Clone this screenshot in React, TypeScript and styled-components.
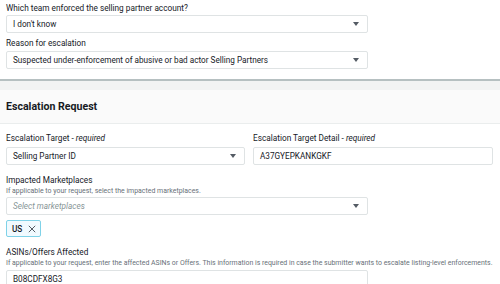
import React from "react";
import styled, { createGlobalStyle } from "styled-components";

const Global = createGlobalStyle`
  html, body { margin: 0; padding: 0; background: #ffffff; }
  body { font-family: Roboto, "Noto Sans", sans-serif; color: #16191f; width: 500px; height: 284px; overflow: hidden; }
`;

const Page = styled.div`
  display: flex;
  flex-direction: column;
`;

const TopSection = styled.div`
  display: flex;
  flex-direction: column;
  padding: 2px 6px 0 6px;
  height: 81px;
  box-sizing: border-box;
  border-bottom: 2px solid #b6c0c1;
`;

const Band = styled.div`
  height: 9px;
  background: #f2f3f3;
`;

const Header = styled.div`
  height: 33px;
  background: #fafafa;
  border-bottom: 1px solid #eaeded;
  display: flex;
  align-items: center;
  padding: 0 6px;
  font-size: 10.6px;
  font-weight: 700;
  color: #16191f;
`;

const Body = styled.div`
  display: flex;
  flex-direction: column;
  padding: 8px 7px 0 6px;
`;

const Row = styled.div`
  display: grid;
  grid-template-columns: 239px 240px;
  column-gap: 8px;
`;

const Field = styled.div<{ $mt?: number; $w?: number }>`
  display: flex;
  flex-direction: column;
  margin-top: ${(p) => p.$mt ?? 0}px;
  width: ${(p) => (p.$w ? `${p.$w}px` : "auto")};
`;

const Label = styled.div<{ $mb?: number; $h?: number }>`
  font-size: 8.25px;
  line-height: ${(p) => p.$h ?? 12}px;
  height: ${(p) => p.$h ?? 12}px;
  color: #16191f;
  white-space: nowrap;
  margin-bottom: ${(p) => p.$mb ?? 1}px;
  em { font-style: italic; font-weight: 400; }
`;

const Helper = styled.div<{ $mb?: number }>`
  font-size: 6.95px;
  line-height: 10px;
  height: 10px;
  color: #687078;
  white-space: nowrap;
  margin-bottom: ${(p) => p.$mb ?? 1}px;
`;

const Box = styled.div<{ $placeholder?: boolean; $w?: number }>`
  height: 18px;
  width: ${(p) => (p.$w ? `${p.$w}px` : "auto")};
  box-sizing: border-box;
  border: 1px solid #dfe3e4;
  border-radius: 2px;
  background: #fff;
  display: flex;
  align-items: center;
  justify-content: space-between;
  padding: 0 8px 0 6px;
  font-size: 8.2px;
  color: ${(p) => (p.$placeholder ? "#879596" : "#16191f")};
  font-style: ${(p) => (p.$placeholder ? "italic" : "normal")};
  white-space: nowrap;
`;

const Caret = styled.span`
  width: 0;
  height: 0;
  border-left: 3px solid transparent;
  border-right: 3px solid transparent;
  border-top: 4px solid #545b64;
  flex-shrink: 0;
`;

const Token = styled.div`
  margin-top: 5px;
  align-self: flex-start;
  height: 17px;
  box-sizing: border-box;
  padding: 0 4px 0 5px;
  border: 1px solid #7fd2e8;
  border-radius: 2px;
  background: #f1faff;
  display: flex;
  align-items: center;
  gap: 6px;
  font-size: 8.2px;
  font-weight: 500;
  color: #16191f;
`;

const Select = ({ value, placeholder }: { value: string; placeholder?: boolean }) => (
  <Box $placeholder={placeholder}>
    <span>{value}</span>
    <Caret />
  </Box>
);

export default function App() {
  return (
    <Page>
      <Global />
      <TopSection>
        <Field $w={362}>
          <Label>Which team enforced the selling partner account?</Label>
          <Select value="I don't know" />
        </Field>
        <Field $w={362} $mt={4}>
          <Label $mb={2}>Reason for escalation</Label>
          <Select value="Suspected under-enforcement of abusive or bad actor Selling Partners" />
        </Field>
      </TopSection>
      <Band />
      <Header>Escalation Request</Header>
      <Body>
        <Row>
          <Field>
            <Label $mb={3}>
              Escalation Target - <em>required</em>
            </Label>
            <Select value="Selling Partner ID" />
          </Field>
          <Field>
            <Label $mb={3}>
              Escalation Target Detail - <em>required</em>
            </Label>
            <Box>A37GYEPKANKGKF</Box>
          </Field>
        </Row>
        <Field $w={362} $mt={10}>
          <Label $mb={0} $h={11}>Impacted Marketplaces</Label>
          <Helper>If applicable to your request, select the impacted marketplaces.</Helper>
          <Select value="Select marketplaces" placeholder />
          <Token>
            US
            <svg width="8" height="8" viewBox="0 0 8 8">
              <path d="M0.8 0.8 L7.2 7.2 M7.2 0.8 L0.8 7.2" stroke="#545b64" strokeWidth="1" fill="none" />
            </svg>
          </Token>
        </Field>
        <Field $mt={10}>
          <Label $mb={0} $h={11}>ASINs/Offers Affected</Label>
          <Helper $mb={2}>
            If applicable to your request, enter the affected ASINs or Offers. This information is required in case the submitter wants to escalate listing-level enforcements.
          </Helper>
          <Box $w={362}>B08CDFX8G3</Box>
        </Field>
      </Body>
    </Page>
  );
}
